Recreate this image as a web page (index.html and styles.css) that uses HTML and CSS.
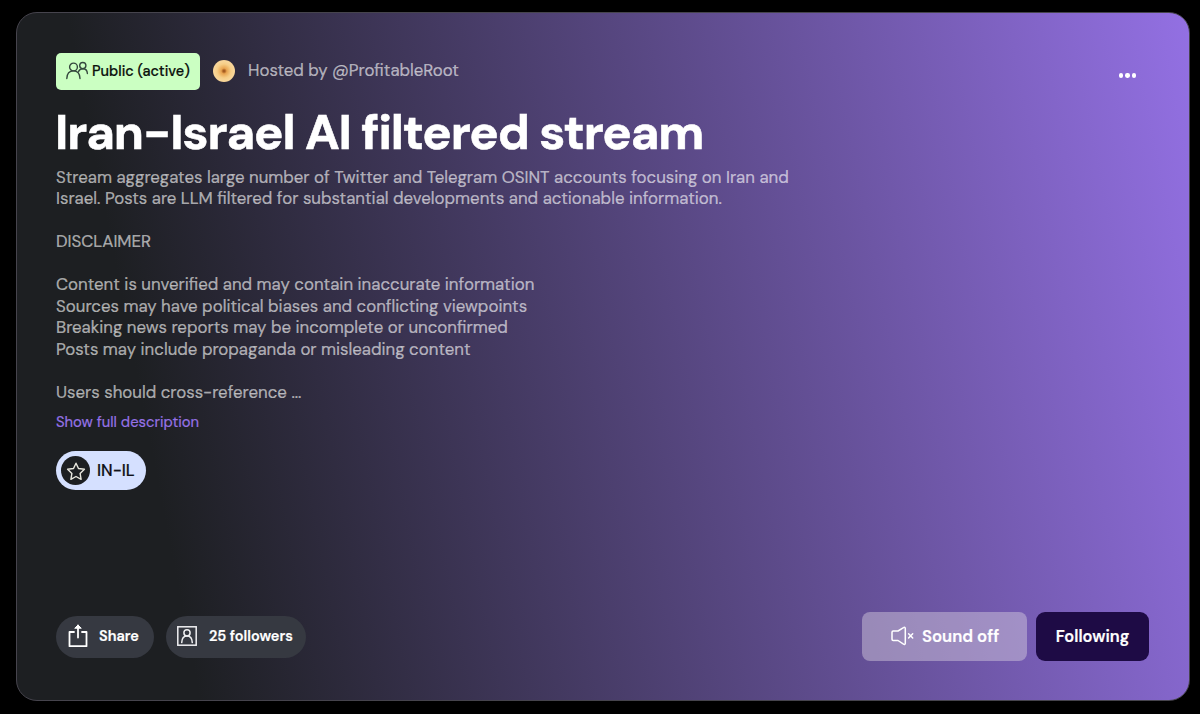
FILE: index.html
```
<!DOCTYPE html>
<html lang="en">
<head>
    <meta charset="UTF-8">
    <title>Iran-Israel AI filtered stream</title>
    <link rel="stylesheet" href="styles.css">
</head>
<body>
    <main class="stream-card">
        <!-- Status and host -->
        <header class="top-row">
            <div class="status-badge">
                <svg width="23" height="20" viewBox="0 0 23 20" fill="none" stroke="#35483e" stroke-width="1.4" stroke-linecap="round">
                    <circle cx="7.5" cy="6" r="3.9"/>
                    <path d="M.8 17.5C1 12.5 3.5 9.900 7.5 9.900s6.300 2.600 6.500 7.600"/>
                    <circle cx="16.800" cy="4.600" r="3.100"/>
                    <path d="M12.600 10.300c1-1.900 2.400-2.600 4.200-2.600 2.800 0 4.400 1.800 4.600 4.800"/>
                </svg>
                <span>Public (active)</span>
            </div>
            <div class="avatar"></div>
            <span class="host">Hosted by @ProfitableRoot</span>
            <button class="more" aria-label="More"><i></i><i></i><i></i></button>
        </header>

        <h1>Iran-Israel AI filtered stream</h1>

        <p class="description">
            Stream aggregates large number of Twitter and Telegram OSINT accounts focusing on Iran and<br>
            Israel. Posts are LLM filtered for substantial developments and actionable information.<br>
            <br>
            DISCLAIMER<br>
            <br>
            Content is unverified and may contain inaccurate information<br>
            Sources may have political biases and conflicting viewpoints<br>
            Breaking news reports may be incomplete or unconfirmed<br>
            Posts may include propaganda or misleading content<br>
            <br>
            Users should cross-reference ...
        </p>
        <a class="show-more">Show full description</a>

        <div class="tag">
            <span class="tag-icon">
                <svg width="20" height="20" viewBox="0 0 20 20" fill="none" stroke="#e9e8df" stroke-width="1.4" stroke-linejoin="round">
                    <path d="M10 2.200l2.500 5.300 5.900.8-4.300 4.100 1 5.900L10 15.500l-5.100 2.800 1-5.900L1.600 8.300l5.900-.8z"/>
                </svg>
            </span>
            <span>IN-IL</span>
        </div>

        <!-- Actions -->
        <footer class="bottom-row">
            <button class="pill share">
                <svg width="20" height="24" viewBox="0 0 20 24" fill="none" stroke="#fff" stroke-width="1.8" stroke-linecap="round" stroke-linejoin="round">
                    <path d="M6 8H1.500v14.200h17V8H14M10 13.500V1.500"/>
                    <path d="M7 4l3-3 3 3z" fill="#fff" stroke-width="1"/>
                </svg>
                <span>Share</span>
            </button>
            <button class="pill followers">
                <svg width="20" height="20" viewBox="0 0 20 20" fill="none" stroke="#f0f0f2" stroke-width="1.5">
                    <rect x=".8" y=".8" width="18.4" height="18.4"/>
                    <circle cx="10" cy="6.8" r="3.1"/>
                    <path d="M4.700 16.600c.2-4.400 2-6.700 5.300-6.700s5.100 2.300 5.300 6.700" stroke-linecap="round"/>
                </svg>
                <span>25 followers</span>
            </button>
            <button class="sound">
                <svg width="23" height="20" viewBox="0 0 23 20" fill="none" stroke="#fff" stroke-width="1.5" stroke-linecap="round" stroke-linejoin="round">
                    <path d="M1 6.200v7.100c0 .8.500 1.200 1.200 1.200H7l5.500 3.700c1 .6 1.800.1 1.800-.9V2.500c0-1-.8-1.600-1.800-.9L7 5H2.200C1.500 5 1 5.400 1 6.200zM17.600 7.700l4.100 4.300M21.700 7.700l-4.100 4.300"/>
                </svg>
                <span>Sound off</span>
            </button>
            <button class="following">Following</button>
        </footer>
    </main>
</body>
</html>
```
FILE: styles.css
```
* {
    box-sizing: border-box;
}

body {
    margin: 0;
    padding: 12px 10px 13px 16px;
    height: 714px;
    background: #000;
    font-family: "DM Sans", Inter, sans-serif;
    font-optical-sizing: none;
    -webkit-text-stroke: 0.2px;
    overflow: hidden;
}

button {
    border: 0;
    padding: 0;
    font-family: inherit;
    color: #fff;
    white-space: nowrap;
}

svg {
    flex: none;
}

.stream-card {
    height: 689px;
    padding: 40px 40px 39px 39px;
    display: flex;
    flex-direction: column;
    align-items: flex-start;
    border: 1px solid #46444d;
    border-radius: 21px;
    background: linear-gradient(79deg, #1d1f22 14%, #9370e3 100%);
    color: #fff;
}

.top-row {
    width: 100%;
    height: 37px;
    display: flex;
    align-items: center;
}

.status-badge {
    width: 144px;
    height: 37px;
    padding: 0 0 1px 10px;
    display: flex;
    align-items: center;
    gap: 3px;
    border-radius: 5px;
    background: #cbffc2;
    color: #0c120d;
    font-size: 14.5px;
    font-weight: 500;
    white-space: nowrap;
}

.avatar {
    width: 22px;
    height: 22px;
    margin: -1px 13px 0 13px;
    border-radius: 50%;
    background: radial-gradient(circle, #a65c20 0 6%, #e9a551 18%, #f6ce87 45%, #f8d69a 65%, #efb56c 100%);
}

.host {
    margin-top: -3px;
    color: rgba(255, 255, 255, 0.6);
    font-size: 16.8px;
}

.more {
    margin: 8px 13px 0 auto;
    display: flex;
    gap: 2px;
    background: none;
}

.more i {
    width: 4.3px;
    height: 4.3px;
    border-radius: 50%;
    background: #fff;
}

h1 {
    margin: 12px 0 0 -1px;
    height: 60px;
    line-height: 60px;
    font-size: 49px;
    font-weight: 700;
    letter-spacing: -1.07px;
    -webkit-text-stroke: 0.6px;
    white-space: nowrap;
}

.description {
    margin: 4.5px 0 0;
    color: rgba(255, 255, 255, 0.6);
    font-size: 16.83px;
    line-height: 21.5px;
    white-space: nowrap;
}

.show-more {
    margin-top: 9px;
    color: #9672e6;
    font-size: 14.8px;
    line-height: 20px;
}

.tag {
    width: 90px;
    height: 39px;
    margin-top: 19px;
    padding-left: 5px;
    display: flex;
    align-items: center;
    gap: 7px;
    border-radius: 20px;
    background: #d5e0ff;
    color: #101018;
    font-size: 16.5px;
    font-weight: 500;
    white-space: nowrap;
}

.tag-icon {
    width: 29px;
    height: 29px;
    display: flex;
    align-items: center;
    justify-content: center;
    border-radius: 50%;
    background: #1d1f22;
}

.bottom-row {
    width: 100%;
    height: 49px;
    margin-top: auto;
    display: flex;
    align-items: center;
}

.pill {
    height: 42px;
    padding-bottom: 1px;
    display: flex;
    align-items: center;
    border-radius: 21px;
    background: #363941;
    font-size: 14.5px;
    font-weight: 600;
}

.share {
    width: 98px;
    padding-left: 12px;
    gap: 11px;
}

.followers {
    width: 140px;
    margin-left: 12px;
    padding-left: 11px;
    gap: 12px;
}

.sound {
    width: 165px;
    height: 49px;
    margin-left: auto;
    padding: 0 0 1px 29px;
    display: flex;
    align-items: center;
    gap: 8px;
    border-radius: 8px;
    background: rgba(217, 208, 225, 0.45);
    font-size: 16.7px;
    font-weight: 600;
}

.following {
    width: 113px;
    height: 49px;
    margin-left: 9px;
    border-radius: 9px;
    background: #1e0b45;
    font-size: 16.4px;
    font-weight: 600;
}
```
